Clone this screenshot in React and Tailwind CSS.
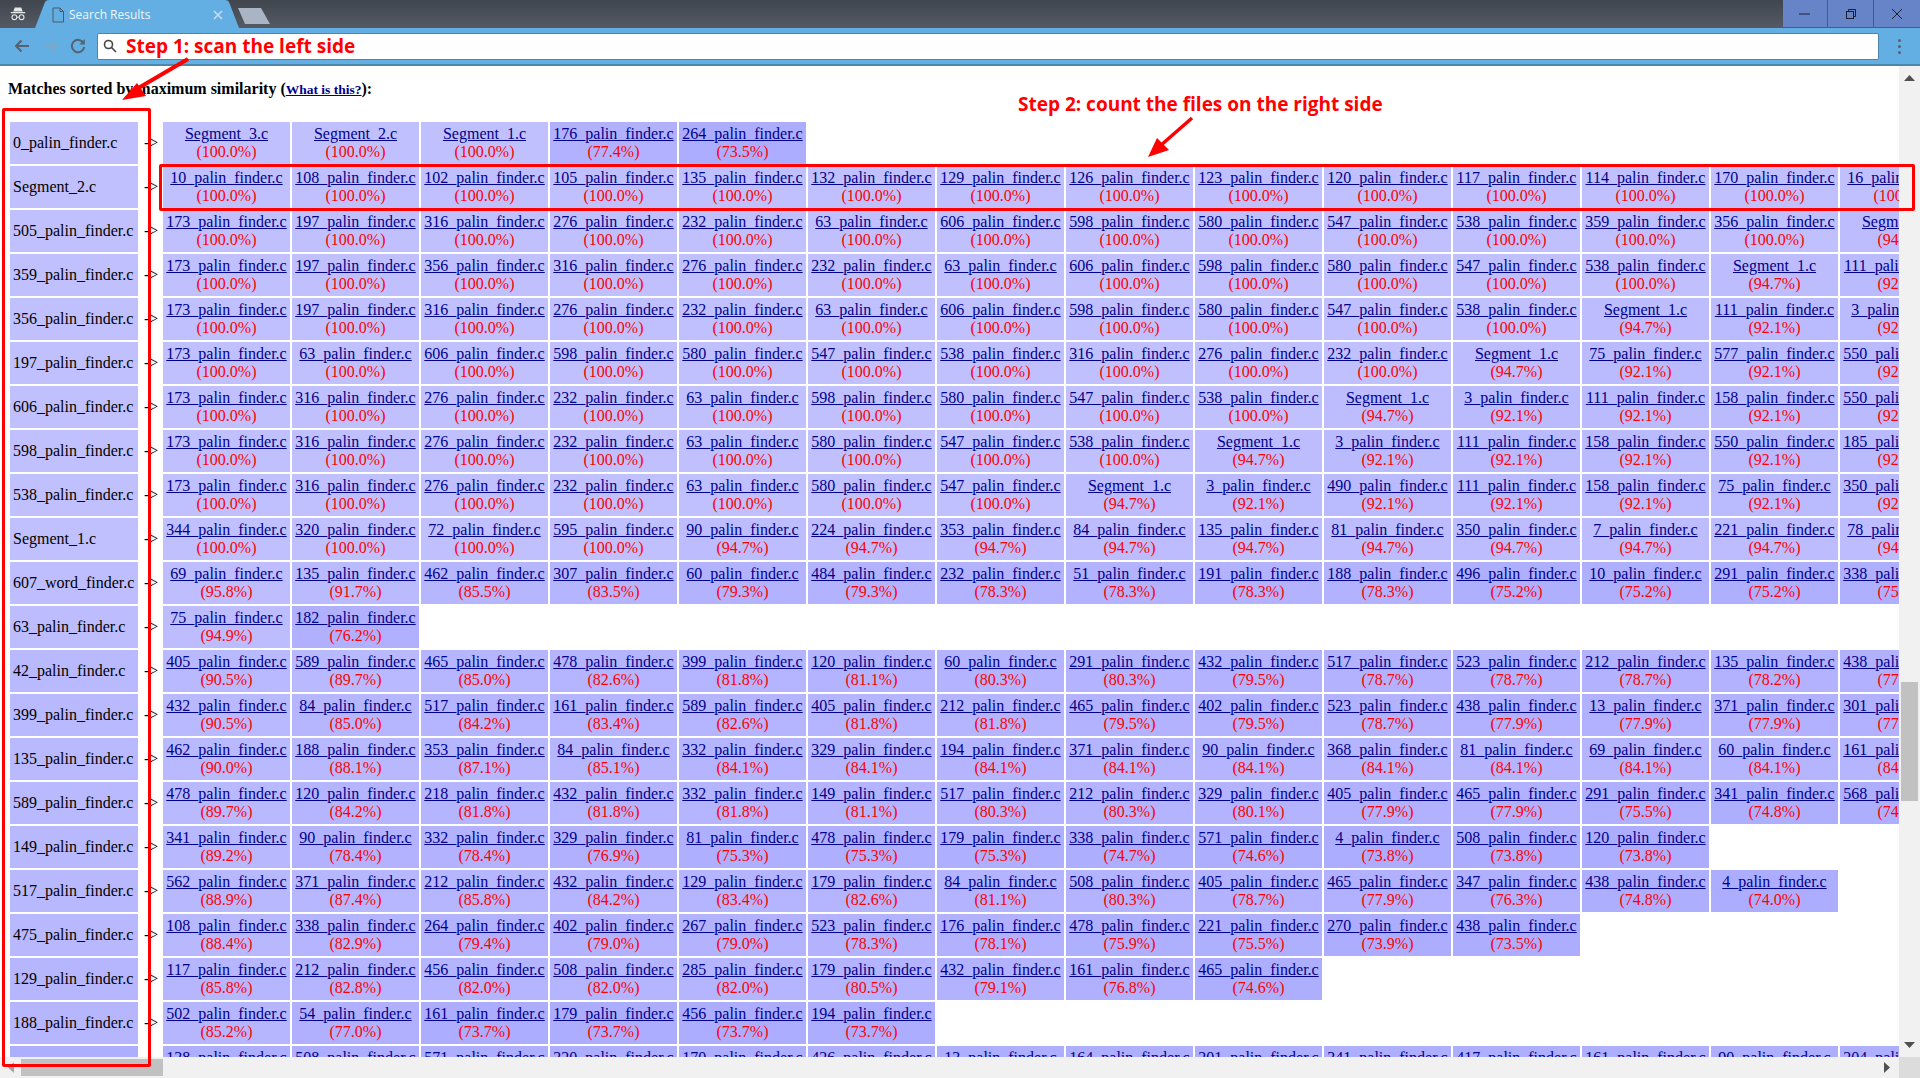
import React from "react";

const DATA = [
  ["0_palin_finder.c", "Segment_3 Segment_2 Segment_1:100.0 176:77.4 264:73.5"],
  ["Segment_2.c", "10 108 102 105 135 132 129 126 123 120 117 114 170 16:100.0"],
  ["505_palin_finder.c", "173 197 316 276 232 63 606 598 580 547 538 359 356:100.0 Segment_1:94.7"],
  ["359_palin_finder.c", "173 197 356 316 276 232 63 606 598 580 547 538:100.0 Segment_1:94.7 111:92.1"],
  ["356_palin_finder.c", "173 197 316 276 232 63 606 598 580 547 538:100.0 Segment_1:94.7 111 3:92.1"],
  ["197_palin_finder.c", "173 63 606 598 580 547 538 316 276 232:100.0 Segment_1:94.7 75 577 550:92.1"],
  ["606_palin_finder.c", "173 316 276 232 63 598 580 547 538:100.0 Segment_1:94.7 3 111 158 550:92.1"],
  ["598_palin_finder.c", "173 316 276 232 63 580 547 538:100.0 Segment_1:94.7 3 111 158 550 185:92.1"],
  ["538_palin_finder.c", "173 316 276 232 63 580 547:100.0 Segment_1:94.7 3 490 111 158 75 350:92.1"],
  ["Segment_1.c", "344 320 72 595:100.0 90 224 353 84 135 81 350 7 221 78:94.7"],
  ["607_word_finder.c", "69:95.8 135:91.7 462:85.5 307:83.5 60 484:79.3 232 51 191 188:78.3 496 10 291 338:75.2"],
  ["63_palin_finder.c", "75:94.9 182:76.2"],
  ["42_palin_finder.c", "405:90.5 589:89.7 465:85.0 478:82.6 399:81.8 120:81.1 60 291:80.3 432:79.5 517 523 212:78.7 135:78.2 438:77.9"],
  ["399_palin_finder.c", "432:90.5 84:85.0 517:84.2 161:83.4 589:82.6 405 212:81.8 465 402:79.5 523:78.7 438 13 371 301:77.9"],
  ["135_palin_finder.c", "462:90.0 188:88.1 353:87.1 84:85.1 332 329 194 371 90 368 81 69 60 161:84.1"],
  ["589_palin_finder.c", "478:89.7 120:84.2 218 432 332:81.8 149:81.1 517 212:80.3 329:80.1 405 465:77.9 291:75.5 341 568:74.8"],
  ["149_palin_finder.c", "341:89.2 90 332:78.4 329:76.9 81 478 179:75.3 338:74.7 571:74.6 4 508 120:73.8"],
  ["517_palin_finder.c", "562:88.9 371:87.4 212:85.8 432:84.2 129:83.4 179:82.6 84:81.1 508:80.3 405:78.7 465:77.9 347:76.3 438:74.8 4:74.0"],
  ["475_palin_finder.c", "108:88.4 338:82.9 264:79.4 402 267:79.0 523:78.3 176:78.1 478:75.9 221:75.5 270:73.9 438:73.5"],
  ["129_palin_finder.c", "117:85.8 212:82.8 456 508 285:82.0 179:80.5 432:79.1 161:76.8 465:74.6"],
  ["188_palin_finder.c", "502:85.2 54:77.0 161 179 456 194:73.7"],
  ["", "138 508 571 320 170 426 13 164 201 341 417 161 90 204:75.0"],
];

function parse(str) {
  const out = [];
  let pending = [];
  for (const tok of str.split(" ")) {
    const [n, s] = tok.split(":");
    pending.push(n);
    if (s) {
      for (const p of pending) {
        out.push({ name: /^\d+$/.test(p) ? `${p}_palin_finder.c` : `${p}.c`, sim: s });
      }
      pending = [];
    }
  }
  return out;
}

const STOPS = [[73.5, 173], [78.7, 178], [84.1, 181], [92.1, 186], [100, 192]];

function tint(sim) {
  const s = parseFloat(sim);
  let v = 173;
  for (let i = 0; i < STOPS.length - 1; i++) {
    const [a, av] = STOPS[i];
    const [b, bv] = STOPS[i + 1];
    if (s >= a && s <= b) v = av + ((s - a) / (b - a)) * (bv - av);
  }
  v = Math.round(v);
  return `rgb(${v},${v},255)`;
}

function Row({ label, cells }) {
  const parsed = parse(cells);
  return (
    <div className="flex h-[42px] shrink-0">
      <div
        className="w-[128px] ml-[10px] shrink-0 flex items-center pl-[3px] text-black"
        style={{ backgroundColor: tint(parsed[0].sim) }}
      >
        {label}
      </div>
      <div className="w-[25px] shrink-0 flex items-center pl-[6px] text-black">-&gt;</div>
      <div className="flex gap-[2px]">
        {parsed.map((c, i) => (
          <div
            key={i}
            className="w-[127px] shrink-0 flex flex-col items-center justify-center leading-[18px] whitespace-nowrap"
            style={{ backgroundColor: tint(c.sim) }}
          >
            <a className="underline text-[#00008b]">{c.name}</a>
            <span className="text-[#ff0000]">({c.sim}%)</span>
          </div>
        ))}
      </div>
    </div>
  );
}

function ChromeTop() {
  return (
    <div className="h-[28px] shrink-0 flex bg-gradient-to-b from-[#40454e] to-[#555b64] relative">
      <div className="w-[36px] shrink-0 flex items-center justify-center pb-[1px]">
        <svg width="16" height="16" viewBox="0 0 20 18">
          <path d="M4 6 L6 1 H14 L16 6 Z" fill="#e4e6e8" />
          <rect x="1" y="6.5" width="18" height="1.6" fill="#e4e6e8" />
          <circle cx="5.5" cy="13" r="3" fill="none" stroke="#e4e6e8" strokeWidth="1.4" />
          <circle cx="14.5" cy="13" r="3" fill="none" stroke="#e4e6e8" strokeWidth="1.4" />
          <path d="M8.5 13 H11.5" stroke="#e4e6e8" strokeWidth="1.2" />
        </svg>
      </div>
      <div className="relative w-[208px] h-[28px] shrink-0 -ml-[1px]">
        <svg width="208" height="28" viewBox="0 0 208 28" className="absolute inset-0">
          <path d="M0 28 L10 2 Q11 0 14 0 H190 Q193 0 194 2 L204 28 Z" fill="#63aee2" />
        </svg>
        <div className="absolute left-[16px] top-[1px] h-[28px] flex items-center gap-[4px] font-['Open_Sans',sans-serif] text-[12px] text-[#f0f6fb]">
          <svg width="14" height="16" viewBox="0 0 14 16" fill="none" stroke="#4c5a68" strokeWidth="1">
            <path d="M2 1 H9 L12.5 4.5 V15 H2 Z M9 1 V4.5 H12.5" />
          </svg>
          <span>Search Results</span>
        </div>
        <svg width="10" height="10" viewBox="0 0 10 10" className="absolute left-[178px] top-[10px]" stroke="#c9dff0" strokeWidth="1.5">
          <path d="M1 1 L9 9 M9 1 L1 9" />
        </svg>
      </div>
      <svg width="36" height="18" viewBox="0 0 36 18" className="mt-[7px] -ml-[6px] shrink-0">
        <path d="M1 1 H24 L33 17 H8 Z" fill="#a9b5c4" />
      </svg>
      <div className="ml-auto flex h-[27px] bg-[#6884c8] w-[137px] shrink-0">
        <div className="w-[45px] flex items-center justify-center border-r border-[#4b5a78]">
          <svg width="12" height="2"><rect width="11" height="1" y="0.5" fill="#1a2030" /></svg>
        </div>
        <div className="w-[46px] flex items-center justify-center border-r border-[#4b5a78]">
          <svg width="12" height="12" viewBox="0 0 12 12" fill="none" stroke="#1a2030">
            <rect x="1.5" y="3.5" width="7" height="7" />
            <path d="M3.5 3.5 V1.5 H10.5 V8.5 H8.5" />
          </svg>
        </div>
        <div className="flex-1 flex items-center justify-center">
          <svg width="12" height="12" viewBox="0 0 12 12" stroke="#1a2030">
            <path d="M1 1 L11 11 M11 1 L1 11" />
          </svg>
        </div>
      </div>
    </div>
  );
}

function Toolbar() {
  return (
    <div className="h-[38px] shrink-0 bg-[#63aee2] border-b-2 border-[#4f87ab] flex items-center">
      <div className="w-[97px] shrink-0 flex items-center pl-[14px] gap-[12px] pb-[1px]">
        <svg width="16" height="14" viewBox="0 0 16 14" fill="none" stroke="#56626e" strokeWidth="2">
          <path d="M15 7 H2 M7.5 1.5 L2 7 L7.5 12.5" />
        </svg>
        <svg width="16" height="14" viewBox="0 0 16 14" fill="none" stroke="#7ea6c6" strokeWidth="2">
          <path d="M1 7 H14 M8.5 1.5 L14 7 L8.5 12.5" />
        </svg>
        <svg width="16" height="16" viewBox="0 0 16 16" fill="none" stroke="#56626e" strokeWidth="2">
          <path d="M13.6 5.2 A6.2 6.2 0 1 0 14.2 9" />
          <path d="M14.8 1 V6.4 H9.4 Z" fill="#56626e" stroke="none" />
        </svg>
      </div>
      <div className="w-[1782px] h-[27px] shrink-0 bg-white rounded-[2px] border border-[#4d86ad] flex items-center pl-[5px]">
        <svg width="14" height="14" viewBox="0 0 14 14" fill="none" stroke="#444" strokeWidth="1.6">
          <circle cx="5.5" cy="5.5" r="4" />
          <path d="M8.5 8.5 L13 13" />
        </svg>
      </div>
      <div className="flex-1 flex flex-col items-center gap-[3px]">
        <div className="w-[3px] h-[3px] bg-[#56626e] rounded-full" />
        <div className="w-[3px] h-[3px] bg-[#56626e] rounded-full" />
        <div className="w-[3px] h-[3px] bg-[#56626e] rounded-full" />
      </div>
    </div>
  );
}

export default function App() {
  return (
    <div className="relative w-[1920px] h-[1078px] overflow-hidden flex flex-col bg-white font-['Liberation_Serif',serif] text-[16px]">
      <ChromeTop />
      <Toolbar />
      <div className="flex-1 min-h-0 flex">
        <div className="w-[1899px] shrink-0 overflow-hidden flex flex-col gap-[2px]">
          <div className="h-[54px] shrink-0 pl-[8px] pt-[13px] font-bold leading-[20px] text-black whitespace-nowrap">
            Matches sorted by maximum similarity (<a className="underline text-[13.5px] text-[#00008b]">What is this?</a>):
          </div>
          {DATA.map(([label, cells], i) => (
            <Row key={i} label={label} cells={cells} />
          ))}
        </div>
        <div className="flex-1 bg-[#f1f1f1] flex flex-col items-center">
          <svg width="11" height="6" viewBox="0 0 11 6" className="mt-[9px] shrink-0"><path d="M5.5 0 L11 6 H0 Z" fill="#505050" /></svg>
          <div className="w-[17px] h-[119px] bg-[#c1c1c1] mt-[601px] shrink-0" />
          <svg width="11" height="6" viewBox="0 0 11 6" className="mt-auto mb-[9px] shrink-0"><path d="M5.5 6 L11 0 H0 Z" fill="#505050" /></svg>
        </div>
      </div>
      <div className="h-[21px] shrink-0 flex bg-[#f1f1f1]">
        <div className="w-[1899px] shrink-0 flex items-center">
          <svg width="6" height="11" viewBox="0 0 6 11" className="ml-[8px]"><path d="M0 5.5 L6 0 V11 Z" fill="#a3a3a3" /></svg>
          <div className="w-[142px] h-[17px] bg-[#c1c1c1] ml-[7px]" />
          <svg width="6" height="11" viewBox="0 0 6 11" className="ml-auto mr-[9px]"><path d="M6 5.5 L0 0 V11 Z" fill="#505050" /></svg>
        </div>
        <div className="flex-1 bg-[#dcdcdc]" />
      </div>

      {/* Annotations over the screenshot */}
      <div className="absolute left-[2px] top-[108px] w-[149px] h-[959px] border-[3px] border-[#ff0000] rounded-[2px] pointer-events-none" />
      <div className="absolute left-[159px] top-[164px] w-[1756px] h-[47px] border-[3px] border-[#ff0000] rounded-[2px] pointer-events-none" />
      <div className="absolute left-[126px] top-[31px] h-[30px] flex items-center font-['Open_Sans',sans-serif] font-bold text-[19px] text-[#ff0000] whitespace-nowrap">
        Step 1: scan the left side
      </div>
      <div className="absolute left-[1018px] top-[90px] h-[28px] flex items-center font-['Open_Sans',sans-serif] font-bold text-[19px] text-[#ff0000] whitespace-nowrap">
        Step 2: count the files on the right side
      </div>
      <svg width="1920" height="170" viewBox="0 0 1920 170" className="absolute left-0 top-0 pointer-events-none">
        <path d="M188 59 L135 90" stroke="#ff0000" strokeWidth="4" />
        <path d="M122 100 L137 83 L146 96 Z" fill="#ff0000" />
        <path d="M1192 118 L1160 146" stroke="#ff0000" strokeWidth="3.5" />
        <path d="M1148 157 L1157 138 L1169 150 Z" fill="#ff0000" />
      </svg>
    </div>
  );
}
